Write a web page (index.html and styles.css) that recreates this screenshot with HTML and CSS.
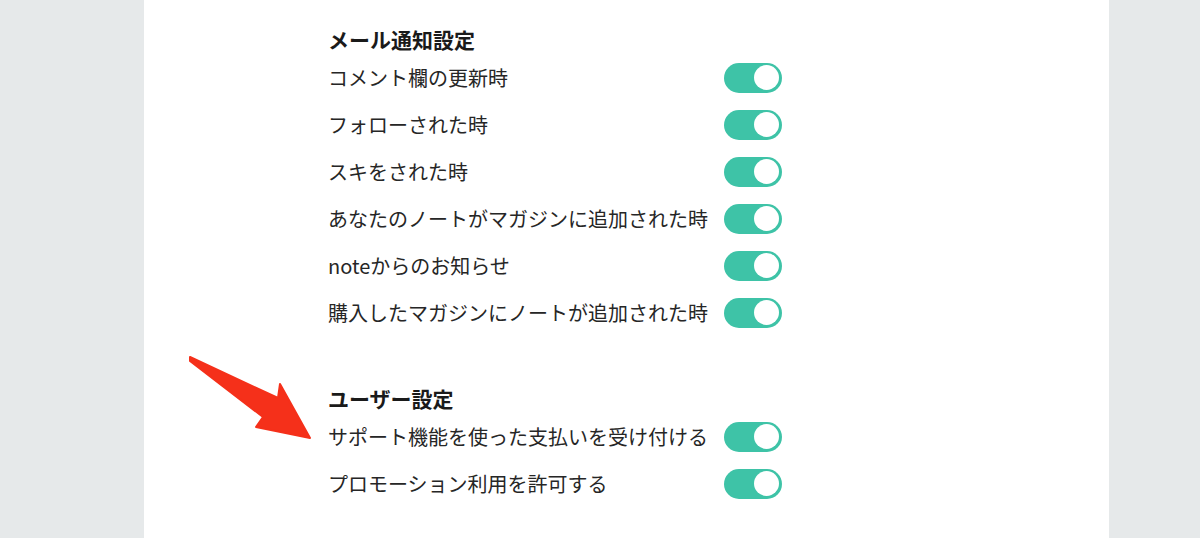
FILE: index.html
```html
<!DOCTYPE html>
<html lang="ja">
<head>
<meta charset="UTF-8" />
<meta name="viewport" content="width=device-width, initial-scale=1" />
<title>通知設定</title>
<link rel="stylesheet" href="styles.css">
</head>
<body>
<div class="page">
  <main class="panel">
    <section class="group">
      <h2>メール通知設定</h2>
      <div class="row"><span>コメント欄の更新時</span><label class="toggle on"><span class="knob"></span></label></div>
      <div class="row"><span>フォローされた時</span><label class="toggle on"><span class="knob"></span></label></div>
      <div class="row"><span>スキをされた時</span><label class="toggle on"><span class="knob"></span></label></div>
      <div class="row"><span>あなたのノートがマガジンに追加された時</span><label class="toggle on"><span class="knob"></span></label></div>
      <div class="row"><span>noteからのお知らせ</span><label class="toggle on"><span class="knob"></span></label></div>
      <div class="row"><span>購入したマガジンにノートが追加された時</span><label class="toggle on"><span class="knob"></span></label></div>
    </section>

    <section class="group">
      <h2>ユーザー設定</h2>
      <div class="row"><span>サポート機能を使った支払いを受け付ける</span><label class="toggle on"><span class="knob"></span></label></div>
      <div class="row"><span>プロモーション利用を許可する</span><label class="toggle on"><span class="knob"></span></label></div>
    </section>

    <!-- 注目用の矢印 -->
    <svg class="pointer" width="140" height="100" viewBox="0 0 140 100">
      <polygon points="10,12 98,53 100,39 130,93 76,82 83,72 10,16" fill="#f5301a" stroke="#f5301a" stroke-width="2" stroke-linejoin="round"/>
    </svg>
  </main>
</div>
</body>
</html>
```

FILE: styles.css
```css
body {
  margin: 0;
  background: #e6e9ea;
  font-family: "Noto Sans CJK JP", "Noto Sans", sans-serif;
  color: #262626;
}
.page {
  height: 538px;
  overflow: hidden;
  padding-left: 144px;
}
.panel {
  position: relative;
  width: 965px;
  height: 100%;
  background: #fff;
  box-sizing: border-box;
  padding: 24px 0 0 184px;
}
.group {
  width: 454px;
  margin-bottom: 47px;
}
.group h2 {
  margin: 0;
  font-size: 21px;
  line-height: 30px;
  font-weight: bold;
  color: #1a1a1a;
}
.row {
  display: flex;
  justify-content: space-between;
  align-items: center;
  height: 47px;
  font-size: 20px;
}
.row > span {
  margin-top: -1px;
}
.toggle {
  display: flex;
  justify-content: flex-end;
  align-items: center;
  width: 58px;
  height: 30px;
  padding: 0 3px;
  box-sizing: border-box;
  border-radius: 15px;
  background: #cfd4d6;
}
.toggle.on {
  background: #3ec3a7;
}
.knob {
  width: 25px;
  height: 25px;
  border-radius: 50%;
  background: #fff;
}
.pointer {
  position: absolute;
  left: 36px;
  top: 345px;
}
```
